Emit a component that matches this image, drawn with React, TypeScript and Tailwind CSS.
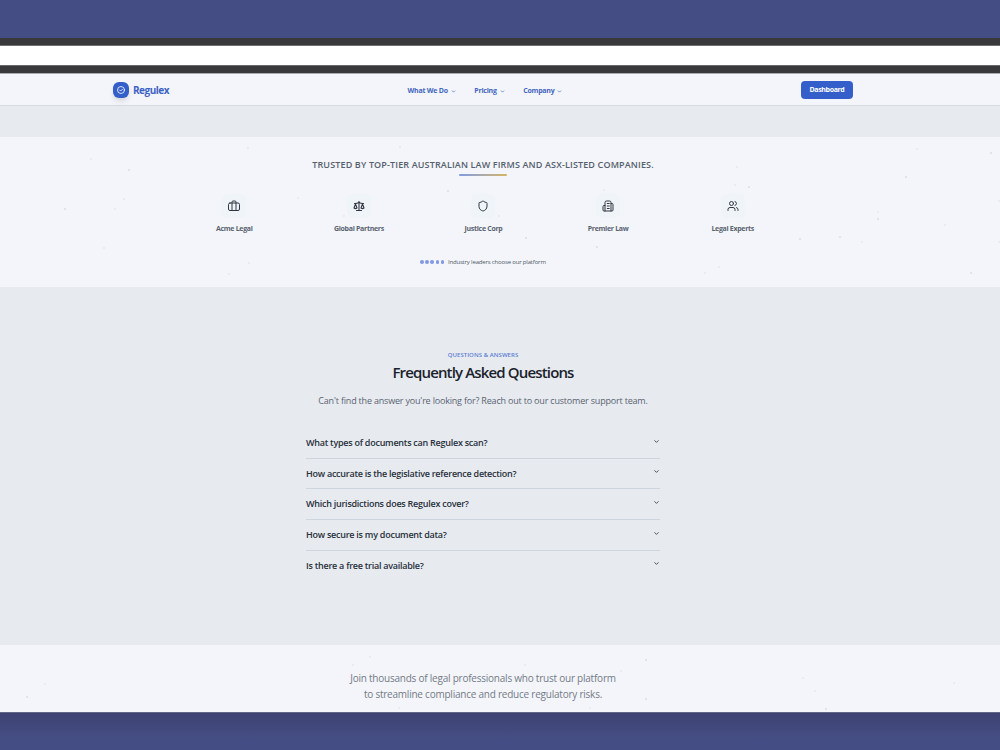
import { ChevronDown, Scale, Shield, Users } from 'lucide-react';
import type { ReactNode } from 'react';

interface Particle {
  x: number;
  y: number;
  strong?: boolean;
}

interface Partner {
  name: string;
  icon: ReactNode;
}

const iconClass = 'h-3 w-3 text-[#303743]';

/* Suitcase with two straps, the body is wider than the handle. */
function SuitcaseIcon() {
  return (
    <svg className={iconClass} viewBox="0 0 24 24" fill="none" stroke="currentColor" strokeWidth="2" strokeLinecap="round" strokeLinejoin="round">
      <path d="M16 20V4a2 2 0 0 0-2-2h-4a2 2 0 0 0-2 2v16" />
      <rect width="22" height="15" x="1" y="6" rx="3" />
    </svg>
  );
}

/* Office block with two side wings. */
function OfficeIcon() {
  return (
    <svg className={iconClass} viewBox="0 0 24 24" fill="none" stroke="currentColor" strokeWidth="2" strokeLinecap="round" strokeLinejoin="round">
      <path d="M6 22V5a3 3 0 0 1 3-3h6a3 3 0 0 1 3 3v17" />
      <path d="M6 11H4a2 2 0 0 0-2 2v7a2 2 0 0 0 2 2h16a2 2 0 0 0 2-2V9a2 2 0 0 0-2-2h-2" />
      <path d="M10.5 7h4M10.5 12h4M10.5 17h4" />
    </svg>
  );
}

/* White ring with a short tick, used inside the brand tile. */
function BrandMark() {
  return (
    <svg className="h-2 w-2 text-white" viewBox="0 0 24 24" fill="none" stroke="currentColor" strokeWidth="2.4" strokeLinecap="round" strokeLinejoin="round">
      <circle cx="12" cy="12" r="10.5" />
      <path d="m8 12 3 3 5-5" />
    </svg>
  );
}

const partners: Partner[] = [
  { name: 'Acme Legal', icon: <SuitcaseIcon /> },
  { name: 'Global Partners', icon: <Scale className={iconClass} strokeWidth={2.2} /> },
  { name: 'Justice Corp', icon: <Shield className={iconClass} /> },
  { name: 'Premier Law', icon: <OfficeIcon /> },
  { name: 'Legal Experts', icon: <Users className={iconClass} /> },
];

const navLinks = ['What We Do', 'Pricing', 'Company'];

const questions = [
  'What types of documents can Regulex scan?',
  'How accurate is the legislative reference detection?',
  'Which jurisdictions does Regulex cover?',
  'How secure is my document data?',
  'Is there a free trial available?',
];

const trustedParticles: Particle[] = [
  { x: 91, y: 22 }, { x: 129, y: 33, strong: true }, { x: 248, y: 11 }, { x: 124, y: 62 }, { x: 65, y: 72, strong: true },
  { x: 115, y: 72 }, { x: 104, y: 111 }, { x: 249, y: 126 }, { x: 229, y: 137 }, { x: 298, y: 61 }, { x: 400, y: 10 },
  { x: 448, y: 54, strong: true }, { x: 344, y: 79 }, { x: 499, y: 79 }, { x: 526, y: 101, strong: true }, { x: 597, y: 110, strong: true },
  { x: 604, y: 53 }, { x: 735, y: 48 }, { x: 749, y: 50, strong: true }, { x: 737, y: 30 }, { x: 917, y: 12 }, { x: 991, y: 16, strong: true },
  { x: 906, y: 40, strong: true }, { x: 878, y: 75 }, { x: 878, y: 82, strong: true }, { x: 840, y: 100, strong: true },
  { x: 800, y: 102, strong: true }, { x: 862, y: 105 }, { x: 945, y: 88 }, { x: 999, y: 64 }, { x: 971, y: 136, strong: true },
  { x: 719, y: 130 }, { x: 705, y: 136 }, { x: 999, y: 105 },
];

const joinParticles: Particle[] = [
  { x: 370, y: 12 }, { x: 353, y: 20 }, { x: 525, y: 20 }, { x: 646, y: 15, strong: true }, { x: 621, y: 26 },
  { x: 646, y: 54, strong: true }, { x: 590, y: 63 }, { x: 399, y: 63 }, { x: 45, y: 39 }, { x: 27, y: 52, strong: true },
  { x: 803, y: 33 }, { x: 815, y: 46 }, { x: 826, y: 64, strong: true }, { x: 954, y: 38 },
];

function Particles({ items }: { items: Particle[] }) {
  return (
    <svg className="pointer-events-none absolute inset-0 h-full w-full" aria-hidden="true">
      {items.map((item) => (
        <circle key={`${item.x}-${item.y}`} cx={item.x} cy={item.y} r="1" fill="#8d97a8" opacity={item.strong ? 0.25 : 0.12} />
      ))}
    </svg>
  );
}

function BrowserFrame() {
  return (
    <>
      <div className="h-[38px] shrink-0 bg-[#454e84]" />
      <div className="h-2 shrink-0 border-b border-[#717173] bg-[#39393b]" />
      <div className="h-[19px] shrink-0 bg-white" />
      <div className="h-[9px] shrink-0 border-y border-t-[#69696b] border-b-[#a9abad] bg-[#39393b]" />
    </>
  );
}

function Header() {
  return (
    <header className="h-8 shrink-0 border-b border-[#d6dbe2] bg-[#f3f5fa]">
      <div className="flex h-[31px] w-[966px] items-center justify-between px-[113px]">
        <div className="flex w-[150px] items-center gap-1">
          <span className="flex h-4 w-4 items-center justify-center rounded-[6px] bg-[#345fcb] shadow-md">
            <BrandMark />
          </span>
          <span className="pt-px text-[10px] font-bold tracking-[-0.5px] text-[#3d63c4]">Regulex</span>
        </div>
        <nav className="flex items-center gap-[18.5px] pt-[3px] pl-1">
          {navLinks.map((label) => (
            <span key={label} className="flex items-center gap-[3px] text-[7px] font-bold tracking-[-0.24px] text-[#4466bd]">
              {label}
              <ChevronDown className="h-[5px] w-[5px]" strokeWidth={3.4} />
            </span>
          ))}
        </nav>
        <div className="flex w-[150px] justify-end">
          <button type="button" className="h-[18px] w-[52px] rounded-[4px] bg-[#345fcb] pt-px text-[7px] font-bold tracking-[-0.36px] text-white">Dashboard</button>
        </div>
      </div>
    </header>
  );
}

function TrustedSection() {
  return (
    <section className="relative h-[150px] shrink-0 bg-[#f3f5fa]">
      <Particles items={trustedParticles} />
      <div className="relative flex w-[966px] flex-col items-center pt-[21px]">
        <h2 className="text-[9px] leading-[14px] font-semibold tracking-[0.14px] whitespace-nowrap text-[#56606d]">
          TRUSTED BY TOP-TIER AUSTRALIAN LAW FIRMS AND ASX-LISTED COMPANIES.
        </h2>
        <div className="mt-[1.5px] h-[2px] w-12 rounded-full bg-linear-to-r from-[#7f9ae0] to-[#d9b45f]" />
        <div className="mt-[18px] grid w-[624px] grid-cols-5 pl-px">
          {partners.map((partner) => (
            <div key={partner.name} className="flex flex-col items-center">
              <div className="flex h-6 w-6 items-center justify-center rounded-md bg-[#eff4f8]">{partner.icon}</div>
              <span className="mt-[6.5px] text-[7px] leading-[10px] font-bold tracking-[-0.3px] text-[#5a6370]">{partner.name}</span>
            </div>
          ))}
        </div>
        <div className="mt-[23px] flex items-center gap-[4px]">
          <div className="flex gap-[1.8px]">
            {[0, 1, 2, 3, 4].map((dot) => (
              <span key={dot} className="h-[3.3px] w-[3.3px] rounded-full bg-[#8198e2]" />
            ))}
          </div>
          <span className="text-[6px] leading-[10px] tracking-[-0.17px] text-[#4f5865]">Industry leaders choose our platform</span>
        </div>
      </div>
    </section>
  );
}

function FaqSection() {
  return (
    <section className="h-[358px] shrink-0 bg-[#e7ebf0]">
      <div className="flex w-[966px] flex-col items-center pt-[63px]">
        <p className="text-[6px] leading-[10px] font-semibold tracking-[0.06px] text-[#5b7dd2]">QUESTIONS &amp; ANSWERS</p>
        <h2 className="mt-px text-[15px] leading-[22px] font-semibold tracking-[-0.85px] text-[#1b222c]">Frequently Asked Questions</h2>
        <p className="mt-[11px] text-[9px] leading-[14px] tracking-[-0.19px] text-[#5a6370]">
          Can't find the answer you're looking for? Reach out to our customer support team.
        </p>
        <ul className="mt-[20px] w-[354px] divide-y divide-[#cfd5dc]">
          {questions.map((question) => (
            <li key={question} className="flex h-[30.7px] justify-between text-[#28303b]">
              <span className="text-[9px] leading-[30px] font-semibold tracking-[-0.25px]">{question}</span>
              <ChevronDown className="mt-[9.5px] mr-[0.5px] h-[7px] w-[7px]" strokeWidth={2.8} />
            </li>
          ))}
        </ul>
      </div>
    </section>
  );
}

function JoinSection() {
  return (
    <section className="relative h-[67px] shrink-0 bg-[#f3f5fa]">
      <Particles items={joinParticles} />
      <p className="relative w-[966px] pt-[25px] text-center text-[10px] leading-4 tracking-[-0.23px] text-[#747b86]">
        Join thousands of legal professionals who trust our platform
        <br />
        to streamline compliance and reduce regulatory risks.
      </p>
    </section>
  );
}

export default function App() {
  return (
    <main className="flex h-[750px] w-[1000px] flex-col overflow-hidden bg-[#454e84] font-['Open_Sans','Noto_Sans',sans-serif]">
      <BrowserFrame />
      <Header />
      <div className="h-[31px] shrink-0 bg-[#e7ebf0]" />
      <TrustedSection />
      <FaqSection />
      <JoinSection />
      <div className="flex-1 border-t border-[#62678a] bg-linear-to-b from-[#3d4272] to-[#454e84] to-70%" />
    </main>
  );
}
